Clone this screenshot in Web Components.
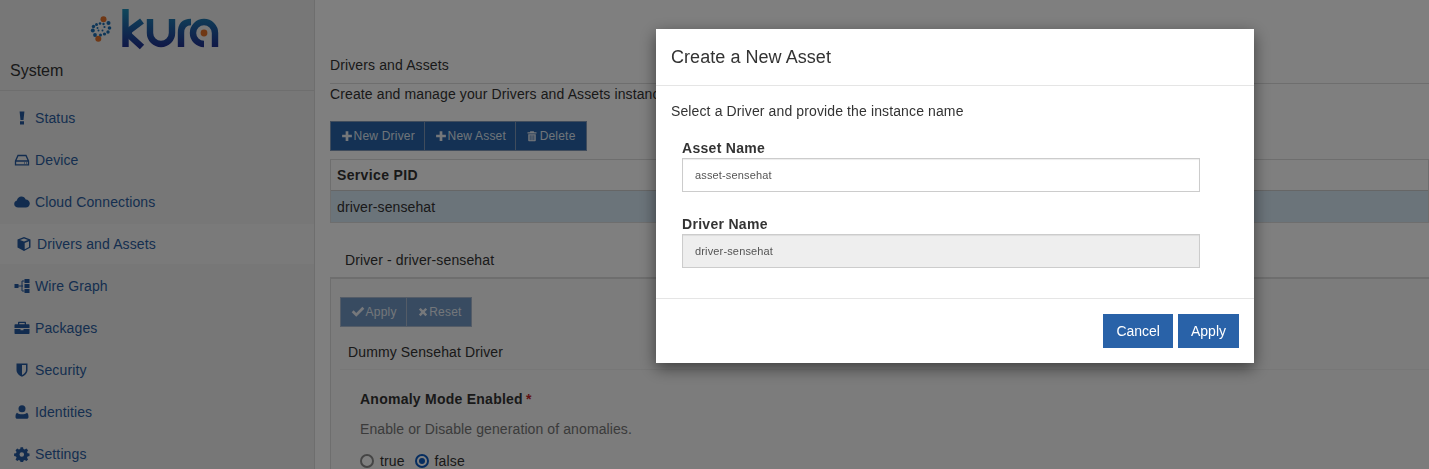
<!DOCTYPE html>
<html>
<head>
<meta charset="utf-8">
<title>Kura</title>
<style>
    html, body {
        margin: 0;
        height: 469px;
        overflow: hidden;
        background: #fff;
        font: 14px/20px "Liberation Sans", Arial, sans-serif;
        letter-spacing: .12px;
        color: #333;
    }
</style>
</head>
<body>
<kura-app>
    <kura-sidebar slot="side">
        <kura-nav-item icon="status">Status</kura-nav-item>
        <kura-nav-item icon="device">Device</kura-nav-item>
        <kura-nav-item icon="cloud">Cloud Connections</kura-nav-item>
        <kura-nav-item icon="cube" active>Drivers and Assets</kura-nav-item>
        <kura-nav-item icon="wire">Wire Graph</kura-nav-item>
        <kura-nav-item icon="packages">Packages</kura-nav-item>
        <kura-nav-item icon="security">Security</kura-nav-item>
        <kura-nav-item icon="identities">Identities</kura-nav-item>
        <kura-nav-item icon="settings">Settings</kura-nav-item>
    </kura-sidebar>
    <kura-drivers slot="main"></kura-drivers>
</kura-app>
<kura-modal heading="Create a New Asset">
    Select a Driver and provide the instance name
    <kura-field slot="fields" label="Asset Name" value="asset-sensehat"></kura-field>
    <kura-field slot="fields" label="Driver Name" value="driver-sensehat" readonly></kura-field>
    <kura-modal-btn slot="footer">Cancel</kura-modal-btn>
    <kura-modal-btn slot="footer">Apply</kura-modal-btn>
</kura-modal>

<script>
const ICONS = {
    status: '<path d="M5.600 1.500h4.800L9.500 10h-3zM6 11.200h4v3.300H6z"/>',
    device: '<path fill="none" stroke="currentColor" stroke-width="1.300" d="M1.500 9 4 3.500h8L14.500 9v3.800h-13zM1.500 9h13"/><path d="M10 10.500h1v1h-1zM12 10.500h1v1h-1z"/>',
    cloud: '<path d="M4.200 13.500C2 13.500.2 12 .2 10c0-1.700 1.100-3 2.700-3.400C3.100 4.300 5.200 2.600 7.500 2.600c1.900 0 3.500 1.100 4.200 2.800 2.300 0 4.100 1.700 4.100 4 0 2.300-1.800 4.100-4.100 4.100z"/>',
    cube: '<path d="M8 1 14.500 3.400V11.600L8 15 1.500 11.600V3.400zM8 2.600 4 4.100 8 5.600 12 4.100zM8.700 13.300 13 11V5.300L8.700 6.900z"/>',
    wire: '<path d="M.5 6h4v4h-4zM10.500 1h5v4h-5zM10.500 6h5v4h-5zM10.500 11h5v4h-5z"/><path fill="none" stroke="currentColor" d="M4 8h5M10.500 3H8v10h2.500"/>',
    packages: '<path d="M5 1.800h6c.6 0 1 .4 1 1V4.200h2.800c.4 0 .7.300.7.700V8H.5V4.900c0-.4.300-.7.700-.7H4V2.800c0-.6.400-1 1-1zM5.300 3v1.200h5.400V3zM.5 9h6v1.300h3V9h6v4.300c0 .4-.3.700-.7.700H1.200c-.4 0-.7-.3-.7-.7z"/>',
    security: '<path d="M2.500 1.500h11V8c0 3.400-2.800 5.500-5.500 6.800C5.300 13.500 2.500 11.400 2.500 8zM8 3v10.100c1.900-1 4-2.600 4-5.100V3z"/>',
    identities: '<circle cx="8" cy="4.800" r="3.500"/><path d="M3 8.700c1.200 1 3 1.500 5 1.500s3.800-.5 5-1.500c1.100.6 1.500 2.200 1.500 4.200 0 1.100-.7 1.900-1.800 1.900H3.300c-1.100 0-1.800-.8-1.800-1.900 0-2 .4-3.600 1.500-4.200z"/>',
    settings: '<path fill-rule="evenodd" d="M6.700 1h2.600l.4 2 1.400.6 1.700-1.100 1.800 1.800-1.100 1.700.6 1.400 2 .4v2.600l-2 .4-.6 1.400 1.100 1.700-1.800 1.800-1.700-1.100-1.400.6-.4 2H6.700l-.4-2-1.400-.6-1.700 1.100-1.800-1.800 1.100-1.700-.6-1.400-2-.4V7.800l2-.4.6-1.400-1.100-1.700 1.800-1.800 1.700 1.100 1.400-.6zM8 6.300a2.400 2.400 0 1 0 0 4.800 2.400 2.400 0 0 0 0-4.800z" transform="translate(.2 .2) scale(.95)"/>',
    plus: '<path d="M6.200 1.500h3.600v4.700h4.700v3.600H9.800v4.700H6.200V9.800H1.500V6.200h4.700z"/>',
    trash: '<path d="M5.800 1.500h4.400l.8 1.500h3v1.500H2V3h3zM3 5.500h10V14c0 .6-.4 1-1 1H4c-.6 0-1-.4-1-1zM5 7v6.500h1V7zM7.500 7v6.500h1V7zM10 7v6.500h1V7z"/>',
    check: '<path d="M6 13.500.8 8.300 3 6.100l3 3 7-7 2.200 2.200z"/>',
    times: '<path d="M4.800 2.500 8 5.700l3.200-3.200 2.300 2.300L10.300 8l3.200 3.200-2.300 2.300L8 10.300l-3.200 3.200-2.300-2.300L5.700 8 2.500 4.800z"/>'
};

const iconSvg = (name, size) =>
    `<svg width="${size}" height="${size}" viewBox="0 0 16 16" fill="currentColor" aria-hidden="true">${ICONS[name]}</svg>`;

class KuraApp extends HTMLElement {
    constructor() {
        super();
        this.attachShadow({ mode: 'open' }).innerHTML = `
        <style>
            :host { display: grid; grid-template-columns: 315px 1fr; height: 469px; overflow: hidden; }
        </style>
        <slot name="side"></slot>
        <slot name="main"></slot>`;
    }
}

class KuraSidebar extends HTMLElement {
    constructor() {
        super();
        this.attachShadow({ mode: 'open' }).innerHTML = `
        <style>
            :host {
                display: block;
                background: #eee;
                border-right: 1px solid #ddd;
                height: 469px;
                overflow: hidden;
            }
            .logo { display: flex; justify-content: center; height: 50px; }
            h2 {
                margin: 0 0 6px;
                padding: 11px 10px 9px;
                font: 400 16px/20px "Liberation Sans", Arial, sans-serif;
                letter-spacing: 0;
                color: #333;
                border-bottom: 1px solid #ddd;
            }
        </style>
        <div class="logo">
            <svg width="150" height="50" viewBox="0 0 150 50" aria-label="Kura logo">
                <defs>
                    <linearGradient id="kg" x1="0" y1="9" x2="0" y2="47" gradientUnits="userSpaceOnUse">
                        <stop offset="0" stop-color="#1f8fb8"/>
                        <stop offset="1" stop-color="#20308f"/>
                    </linearGradient>
                </defs>
                <g fill="#1b6cb0">
                    <circle cx="21.500" cy="19.300" r="3" fill="#e0712a"/>
                    <circle cx="16.300" cy="38.700" r="3" fill="#e0712a"/>
                    <circle cx="26.500" cy="23" r="2"/><circle cx="27.500" cy="28" r="1.800"/><circle cx="26" cy="32" r="1.700"/>
                    <circle cx="22.500" cy="34" r="1.600"/><circle cx="18.500" cy="35" r="1.500"/><circle cx="13" cy="35" r="1.900"/>
                    <circle cx="10.800" cy="30.500" r="2"/><circle cx="11.500" cy="26.500" r="1.700"/><circle cx="14.500" cy="24.500" r="1.500"/>
                    <circle cx="18" cy="23.500" r="1.300"/><circle cx="21.500" cy="24" r="1.200"/><circle cx="22.500" cy="27" r="1.100"/>
                    <circle cx="20.500" cy="30.500" r="1"/><circle cx="16.500" cy="30.500" r="1"/><circle cx="15.500" cy="28" r="1"/>
                </g>
                <g fill="none" stroke="url(#kg)" stroke-width="6.400">
                    <path d="M43.500 9V47"/>
                    <path d="M60 21 48 30Q45 33 48 36L60 47"/>
                    <path d="M68 19V33A11 11 0 0 0 90 33V19"/>
                    <path d="M99 47V33Q99 22 109 22"/>
                    <path d="M133 47V33A11 11 0 1 0 122 44"/>
                </g>
                <circle cx="122" cy="33" r="3.400" fill="#e0712a"/>
            </svg>
        </div>
        <h2>System</h2>
        <slot></slot>`;
    }
}

class KuraNavItem extends HTMLElement {
    constructor() {
        super();
        this.attachShadow({ mode: 'open' }).innerHTML = `
        <style>
            :host {
                display: flex;
                align-items: center;
                height: 42px;
                padding-left: 14px;
                box-sizing: border-box;
                color: #2b5da0;
                font-size: 14px;
            }
            :host([active]) { background: #f5f5f5; height: 40px; margin: 1px 0; padding-left: 16px; }
            .ico { width: 21px; flex: none; display: flex; align-items: center; }
            svg { display: block; color: #24589e; }
        </style>
        <span class="ico"></span><slot></slot>`;
    }

    connectedCallback() {
        this.shadowRoot.querySelector('.ico').innerHTML = iconSvg(this.getAttribute('icon'), 16);
    }
}

class KuraBtnGroup extends HTMLElement {
    constructor() {
        super();
        this.attachShadow({ mode: 'open' }).innerHTML = `
        <style>
            :host { display: inline-flex; height: 30px; vertical-align: top; }
            :host([disabled]) { opacity: .65; }
        </style>
        <slot></slot>`;
    }
}

class KuraToolBtn extends HTMLElement {
    constructor() {
        super();
        this.attachShadow({ mode: 'open' }).innerHTML = `
        <style>
            :host {
                display: inline-flex;
                align-items: center;
                padding: 0 9px 0 10px;
                background: #2962a8;
                border: 1px solid #8098b8;
                border-left: none;
                color: #dfe8f2;
                font-size: 12px;
                letter-spacing: .2px;
            }
            :host(:first-child) { border-left: 1px solid #8098b8; }
            :host([icon="trash"]) { padding-right: 10px; }
            .ico { display: block; margin-right: .6px; }
            :host([icon="trash"]) .ico { margin-right: 1.6px; }
            svg { display: block; color: #e8eef5; }
        </style>
        <span class="ico"></span><slot></slot>`;
    }

    connectedCallback() {
        const name = this.getAttribute('icon');
        this.shadowRoot.querySelector('.ico').innerHTML = iconSvg(name, name === 'check' ? 14 : 12);
    }
}

class KuraDrivers extends HTMLElement {
    constructor() {
        super();
        this.attachShadow({ mode: 'open' }).innerHTML = `
        <style>
            :host { display: block; padding: 55px 0 0 15px; overflow: hidden; height: 469px; box-sizing: border-box; }
            .title { line-height: 20px; padding-bottom: 8px; border-bottom: 1px solid #ddd; }
            .desc { line-height: 20px; margin-bottom: 17px; }
            .pids { margin-top: 8px; border: 1px solid #ddd; }
            .pids .head {
                height: 30px; line-height: 30px; padding-left: 6px;
                font-weight: 700; letter-spacing: .35px; border-bottom: 1px solid #ccc;
            }
            .pids .row { height: 31px; line-height: 32px; padding-left: 6px; background: #d7e8f5; }
            .tab {
                margin-top: 18px; height: 38px; line-height: 38px; padding-left: 15px;
                border-bottom: 2px solid #ddd; box-sizing: border-box;
            }
            .panel { background: #f8f8f8; border-left: 1px solid #ddd; padding: 18px 0 0 9px; height: 200px; }
            .panel h4 {
                margin: 7px 0 0; padding: 8px 0 7px 8px; font: 400 14px/20px "Liberation Sans", Arial, sans-serif;
                letter-spacing: .12px;
                border-bottom: 1px solid #eee;
            }
            .prop { padding: 19px 0 0 20px; }
            .prop b { display: block; line-height: 20px; letter-spacing: .25px; }
            .prop b i { color: #c4242a; font-style: normal; letter-spacing: 0; margin-left: 3px; }
            .prop p { margin: 10px 0 0; color: #767676; line-height: 20px; letter-spacing: .1px; }
            .radios { display: flex; align-items: center; margin-top: 12px; height: 20px; }
            .radio { width: 14px; height: 14px; border: 2px solid #8a8a8a; border-radius: 50%; box-sizing: border-box; margin-right: 6px; background: #fff; }
            .radio.on { border-color: #0d5bc0; display: flex; align-items: center; justify-content: center; }
            .radio.on::after { content: ""; width: 6px; height: 6px; border-radius: 50%; background: #0d5bc0; }
            .radios span + .radio { margin-left: 10px; }
        </style>
        <div class="title">Drivers and Assets</div>
        <div class="desc">Create and manage your Drivers and Assets instances</div>
        <kura-btn-group>
            <kura-tool-btn icon="plus">New Driver</kura-tool-btn>
            <kura-tool-btn icon="plus">New Asset</kura-tool-btn>
            <kura-tool-btn icon="trash">Delete</kura-tool-btn>
        </kura-btn-group>
        <div class="pids">
            <div class="head">Service PID</div>
            <div class="row">driver-sensehat</div>
        </div>
        <div class="tab">Driver - driver-sensehat</div>
        <div class="panel">
            <kura-btn-group disabled>
                <kura-tool-btn icon="check">Apply</kura-tool-btn>
                <kura-tool-btn icon="times">Reset</kura-tool-btn>
            </kura-btn-group>
            <h4>Dummy Sensehat Driver</h4>
            <div class="prop">
                <b>Anomaly Mode Enabled<i>*</i></b>
                <p>Enable or Disable generation of anomalies.</p>
                <div class="radios">
                    <i class="radio"></i><span>true</span>
                    <i class="radio on"></i><span>false</span>
                </div>
            </div>
        </div>`;
    }
}

class KuraModal extends HTMLElement {
    constructor() {
        super();
        this.attachShadow({ mode: 'open' }).innerHTML = `
        <style>
            :host { display: block; position: fixed; inset: 0; background: rgba(0, 0, 0, .5); }
            .dialog {
                position: absolute; left: 656px; top: 29px; width: 598px;
                background: #fff; color: #333;
                box-shadow: 0 5px 15px rgba(0, 0, 0, .5);
            }
            header {
                padding: 15px; height: 57px; box-sizing: border-box;
                font-size: 18px; line-height: 26px; letter-spacing: .05px; border-bottom: 1px solid #e5e5e5;
            }
            .body { padding: 15px 15px 0; height: 213px; box-sizing: border-box; border-bottom: 1px solid #e5e5e5; }
            .fields { margin: 17px 0 0 11px; display: grid; gap: 22px; }
            footer { display: flex; justify-content: flex-end; gap: 5px; padding: 15px; height: 64px; box-sizing: border-box; }
        </style>
        <div class="dialog">
            <header></header>
            <div class="body">
                <slot></slot>
                <div class="fields"><slot name="fields"></slot></div>
            </div>
            <footer><slot name="footer"></slot></footer>
        </div>`;
    }

    connectedCallback() {
        this.shadowRoot.querySelector('header').textContent = this.getAttribute('heading');
    }
}

class KuraField extends HTMLElement {
    constructor() {
        super();
        this.attachShadow({ mode: 'open' }).innerHTML = `
        <style>
            :host { display: block; width: 518px; }
            label { display: block; font-weight: 700; line-height: 20px; letter-spacing: .3px; height: 20px; color: #333; }
            .input {
                height: 34px; box-sizing: border-box; border: 1px solid #ccc;
                padding-left: 12px; font-size: 11px; line-height: 32px; letter-spacing: .15px; color: #555;
                box-shadow: inset 0 1px 1px rgba(0, 0, 0, .075);
            }
            :host([readonly]) .input { background: #eee; }
        </style>
        <label></label>
        <div class="input"></div>`;
    }

    connectedCallback() {
        this.shadowRoot.querySelector('label').textContent = this.getAttribute('label');
        this.shadowRoot.querySelector('.input').textContent = this.getAttribute('value');
    }
}

class KuraModalBtn extends HTMLElement {
    constructor() {
        super();
        this.attachShadow({ mode: 'open' }).innerHTML = `
        <style>
            :host {
                display: inline-block; height: 34px; box-sizing: border-box;
                padding: 0 13px; line-height: 34px; background: #2962a8; color: #fff;
                font-size: 14px; letter-spacing: 0;
            }
        </style>
        <slot></slot>`;
    }
}

customElements.define('kura-app', KuraApp);
customElements.define('kura-sidebar', KuraSidebar);
customElements.define('kura-nav-item', KuraNavItem);
customElements.define('kura-btn-group', KuraBtnGroup);
customElements.define('kura-tool-btn', KuraToolBtn);
customElements.define('kura-drivers', KuraDrivers);
customElements.define('kura-modal', KuraModal);
customElements.define('kura-field', KuraField);
customElements.define('kura-modal-btn', KuraModalBtn);
</script>
</body>
</html>
